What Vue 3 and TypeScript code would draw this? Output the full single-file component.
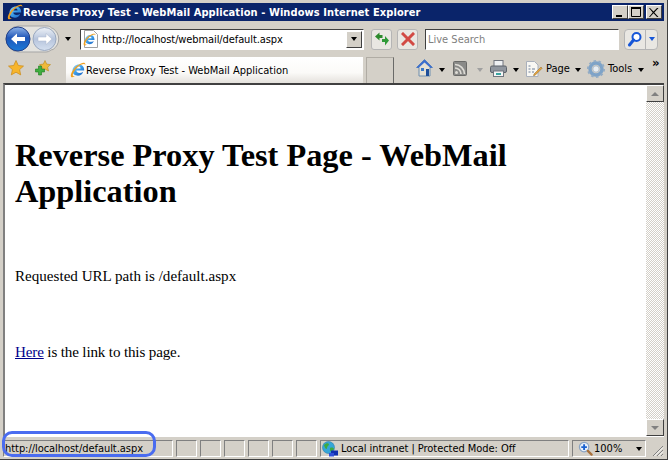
<template>
  <div class="window">
    <svg width="0" height="0" class="defs">
      <defs>
        <linearGradient id="ieBlue" x1="0" y1="0" x2="1" y2="1">
          <stop offset="0" stop-color="#9adcf8" />
          <stop offset="0.5" stop-color="#3a9be8" />
          <stop offset="1" stop-color="#1a5fc0" />
        </linearGradient>
        <linearGradient id="orb" x1="0" y1="0" x2="0" y2="1">
          <stop offset="0" stop-color="#8fb4ea" />
          <stop offset="0.45" stop-color="#1f56b8" />
          <stop offset="1" stop-color="#1a7ad8" />
        </linearGradient>
        <linearGradient id="orbOff" x1="0" y1="0" x2="0" y2="1">
          <stop offset="0" stop-color="#eef2f8" />
          <stop offset="0.5" stop-color="#b6c4dc" />
          <stop offset="1" stop-color="#d5e0f0" />
        </linearGradient>
        <symbol id="ie" viewBox="0 0 16 16">
          <path d="M2.500 9C2.500 5 5.500 2.500 9 2.500c3.400 0 5.200 2.500 5.200 6H6.300c0 2.600 4 3.200 6.900 1.200-.8 2.700-2.900 4-5.200 4-3 0-5.500-1.900-5.500-4.700zM6.400 6.500h4.200C10.500 5.200 9.600 4.600 8.600 4.600c-1 0-1.900.7-2.200 1.900z" fill="url(#ieBlue)" fill-rule="evenodd" />
          <path d="M1.200 15C-.8 12.200 5 3.800 11 1.400c2.600-1 4.600-.6 4.400 1.300-.4-1-2.400-1-4.400 0C7 4.600 2.600 10.600 2.800 13.400c0 .6.800 1 2 .6-1.200 1.200-2.800 1.700-3.600 1z" fill="#f0a020" />
        </symbol>
      </defs>
    </svg>

    <header class="titlebar">
      <svg class="title-icon" width="16" height="16"><use href="#ie" /></svg>
      <span class="title-text">Reverse Proxy Test - WebMail Application - Windows Internet Explorer</span>
      <div class="caption-btns">
        <button class="cap"><svg width="10" height="10"><rect x="1" y="8" width="6" height="2" fill="#000" /></svg></button>
        <button class="cap"><svg width="11" height="10"><path d="M.5 1.500h9v8h-9z" fill="none" stroke="#000" /><rect x="0" y="0" width="10" height="2" fill="#000" /></svg></button>
        <button class="cap close"><svg width="10" height="9"><path d="M1 0l3.500 3.500L8 0h1.500L5.300 4.500l4.200 4.500H8L4.500 5.300 1 9h-1l3.700-4.500L0 0z" fill="#000" /></svg></button>
      </div>
    </header>

    <nav class="navbar">
      <div class="backfwd">
        <svg width="56" height="28" viewBox="0 0 56 28">
          <path d="M14 1h28c4 0 4 2.500 6 2.500a12.500 12.500 0 0 1 0 21c-3 0-3 2.500-7 2.500H14a13 13 0 0 1 0-26z" fill="#e4e3df" stroke="#a5a5a5" />
          <circle cx="13" cy="14" r="12" fill="url(#orb)" stroke="#22408a" />
          <path d="M6 14l6-5.500v3.500h8v4h-8v3.500z" fill="#fff" />
          <circle cx="39.500" cy="14" r="11.500" fill="url(#orbOff)" stroke="#9aa8bf" />
          <path d="M47 14l-6-5.500v3.500h-8v4h8v3.500z" fill="#fff" stroke="#a8b5cc" stroke-width=".5" />
        </svg>
        <span class="caret dark drop-nav"></span>
      </div>

      <div class="address">
        <svg class="page-icon" width="16" height="18" viewBox="0 0 16 18">
          <path d="M1.500 .5h9l4 4v13h-13z" fill="#fff" stroke="#a0a0a0" />
          <use href="#ie" x="0" y="3" width="13" height="13" />
        </svg>
        <span class="address-text">http://localhost/webmail/default.aspx</span>
        <button class="combo"><span class="caret dark"></span></button>
      </div>

      <button class="tool-btn refresh">
        <svg width="16" height="16" viewBox="0 0 16 16">
          <path d="M1 5.500L5.500 1.500v2.500h3v3h-3v2.500z" fill="#2c8a2c" />
          <path d="M15 9.500L11 5v3H8v3h3v3.500z" fill="#2f9a38" />
        </svg>
      </button>
      <button class="tool-btn stop">
        <svg width="14" height="14" viewBox="0 0 14 14">
          <path d="M2 2l10 10M12 2L2 12" stroke="#d24a44" stroke-width="3" stroke-linecap="square" />
        </svg>
      </button>

      <div class="search"><span>Live Search</span></div>
      <div class="search-btn">
        <span class="search-go">
          <svg width="16" height="16" viewBox="0 0 16 16">
            <circle cx="9.500" cy="6" r="4" fill="#fff" stroke="#1656d8" stroke-width="2" />
            <path d="M6.500 9L2.500 14" stroke="#1656d8" stroke-width="3" stroke-linecap="round" />
          </svg>
        </span>
        <span class="search-drop"><span class="caret blue"></span></span>
      </div>
    </nav>

    <div class="favbar">
      <svg class="fav-star" width="16" height="16" viewBox="0 0 16 16">
        <path d="M8 .5l2.300 5 5.200.6-3.900 3.500 1.100 5.300L8 12.200l-4.700 2.700 1.100-5.300L.5 6.100l5.200-.6z" fill="#f7b52c" stroke="#c98a18" stroke-width=".7" />
      </svg>
      <svg class="fav-add" width="16" height="16" viewBox="0 0 16 16">
        <path d="M10 .5l1.700 3.600 3.800.5-2.800 2.600.8 3.800-3.500-2-3.500 2 .8-3.800L4.500 4.600l3.800-.5z" fill="#f0b93a" stroke="#b88a20" stroke-width=".6" />
        <path d="M3.500 6h3v3h3v3h-3v3h-3v-3h-3V9h3z" fill="#3fae3f" stroke="#1d7a1d" stroke-width=".6" />
      </svg>

      <div class="tab">
        <svg width="16" height="16"><use href="#ie" /></svg>
        <span>Reverse Proxy Test - WebMail Application</span>
      </div>
      <div class="tab-new"></div>

      <div class="commands">
        <svg class="cmd-home" width="17" height="18" viewBox="0 0 17 18">
          <path d="M8.500 .5L.5 8.500h2.500V17h11V8.500h2.500z" fill="#e6e1d4" stroke="#6f8fb0" />
          <path d="M8.500 .5L.5 8.500l2 .5 6-5.500 6 5.500 2-.5z" fill="#3c6fcf" />
          <rect x="5" y="9" width="3" height="3" fill="#3a78c8" />
          <rect x="10" y="10" width="3" height="7" fill="#1f4f9a" />
        </svg>
        <span class="caret dark c1"></span>
        <svg class="cmd-feed" width="14" height="15" viewBox="0 0 14 15">
          <rect x=".5" y=".5" width="13" height="14" rx="1" fill="#8a8a88" stroke="#6a6a68" />
          <circle cx="3.500" cy="11.500" r="1.500" fill="#dedcd6" />
          <path d="M2 7a6 6 0 0 1 6 6M2 3.500A9.500 9.500 0 0 1 11.500 13" fill="none" stroke="#dedcd6" stroke-width="1.700" />
        </svg>
        <span class="caret grey c2"></span>
        <svg class="cmd-print" width="17" height="17" viewBox="0 0 17 17">
          <rect x="4" y=".5" width="9" height="6" fill="#eef0f3" stroke="#70757e" />
          <rect x=".5" y="6" width="16" height="6.500" rx="1.500" fill="#8f959e" stroke="#5c626b" />
          <rect x="3.500" y="11" width="10" height="5.500" fill="#f4f5f6" stroke="#70757e" />
          <rect x="6" y="13" width="5" height="2" fill="#3aa4a0" />
        </svg>
        <span class="caret dark c3"></span>
        <svg class="cmd-page" width="18" height="18" viewBox="0 0 18 18">
          <path d="M1.500 1.500h8l3.500 3.500v11.500h-11.500z" fill="#f8f7f3" stroke="#a9b0bc" />
          <path d="M3.500 6h2M3.500 9h2M3.500 12h2M7 9h3M7 12h2" stroke="#6d7f99" />
          <path d="M9 14l7-7 1.200 1.200-7 7-1.700.5z" fill="#e8a33a" stroke="#8a6a30" stroke-width=".5" />
        </svg>
        <span class="cmd-label page-label">Page</span>
        <span class="caret dark c4"></span>
        <svg class="cmd-gear" width="18" height="18" viewBox="0 0 18 18">
          <circle cx="9" cy="9" r="6" fill="none" stroke="#7ea3c8" stroke-width="3.400" />
          <circle cx="9" cy="9" r="8" fill="none" stroke="#92abc4" stroke-width="2" stroke-dasharray="2.500 2.500" />
          <circle cx="9" cy="9" r="3.200" fill="#e8edf2" stroke="#8aa0b6" stroke-width=".6" />
        </svg>
        <span class="cmd-label tools-label">Tools</span>
        <span class="caret dark c5"></span>
        <span class="chevrons">»</span>
      </div>
    </div>

    <div class="viewport">
      <main class="page">
        <h1>Reverse Proxy Test Page - WebMail Application</h1>
        <p class="path-line">Requested URL path is /default.aspx</p>
        <p class="link-line"><a href="#">Here</a> is the link to this page.</p>
      </main>
      <aside class="scrollbar">
        <div class="arrow"><span class="tri up"></span></div>
        <div class="track"></div>
        <div class="arrow"><span class="tri down"></span></div>
      </aside>
    </div>

    <footer class="statusbar">
      <div class="cell url">http://localhost/default.aspx</div>
      <div v-for="n in 6" :key="n" class="cell blank"></div>
      <div class="cell zone">
        <svg width="16" height="16" viewBox="0 0 16 16">
          <circle cx="6.500" cy="6.500" r="6" fill="#35a6d8" stroke="#2a7fae" stroke-width=".6" />
          <path d="M2 4c2-2 4-2 5-1 0 2-2 2-2 4s-2 1-3-3zM8 7c2-1 4 0 4 1-1 2-3 3-4 2z" fill="#3faa3f" />
          <rect x="9" y="9.500" width="7" height="5" fill="#1030b0" />
          <rect x="7" y="12" width="5" height="3.500" fill="#3050d8" />
        </svg>
        <span>Local intranet | Protected Mode: Off</span>
      </div>
      <div class="cell zoom">
        <svg class="zoom-icon" width="15" height="15" viewBox="0 0 16 16">
          <circle cx="6.500" cy="6.500" r="5" fill="#e8f0fa" stroke="#8aa4c4" stroke-width="1.300" />
          <path d="M6.500 3.500v6M3.500 6.500h6" stroke="#1a62d0" stroke-width="2" />
          <path d="M10.500 10.500l4 4" stroke="#a8703a" stroke-width="2.400" stroke-linecap="round" />
        </svg>
        <span>100%</span>
        <span class="caret dark zoom-caret"></span>
      </div>
      <svg class="grip" width="12" height="12" viewBox="0 0 12 12">
        <path d="M11 1L1 11M11 5l-6 6M11 9l-2 2" stroke="#808080" />
        <path d="M11 2.500L2.500 11M11 6.500L6.500 11M11 10.500l-.5.500" stroke="#fff" />
      </svg>
    </footer>

    <div class="status-highlight"></div>
  </div>
</template>

<script setup lang="ts">
</script>

<style>
html,
body {
  margin: 0;
  overflow: hidden;
}
</style>

<style scoped>
.window {
  position: relative;
  width: 668px;
  height: 460px;
  box-sizing: border-box;
  padding: 3px 3px 2px;
  background: #d4d0c8;
  border-bottom: 1px solid #404040;
  border-right: 1px solid #404040;
  display: flex;
  flex-direction: column;
  font-family: "DejaVu Sans Condensed", "DejaVu Sans", sans-serif;
  font-stretch: condensed;
  color: #000;
  overflow: hidden;
}

.defs {
  position: absolute;
}

button {
  padding: 0;
  margin: 0;
  font: inherit;
}

.titlebar {
  height: 18px;
  flex: none;
  background: #0a246a;
  display: flex;
  align-items: center;
  padding: 0 2px 0 4px;
}

.title-icon {
  flex: none;
}

.title-text {
  color: #fff;
  font-weight: 700;
  font-size: 11px;
  letter-spacing: 0.08px;
  white-space: nowrap;
}

.caption-btns {
  margin-left: auto;
  display: flex;
}

.cap {
  width: 16px;
  height: 14px;
  background: #d4d0c8;
  border: 1px solid;
  border-color: #fff #404040 #404040 #fff;
  display: flex;
  align-items: center;
  justify-content: center;
}

.cap.close {
  margin-left: 2px;
}

.navbar {
  height: 36px;
  flex: none;
  display: flex;
  align-items: center;
}

.backfwd {
  display: flex;
  align-items: center;
  flex: none;
  width: 77px;
  padding-left: 2px;
  box-sizing: border-box;
}

.drop-nav {
  margin-left: 4px;
}

.address {
  width: 284px;
  height: 21px;
  box-sizing: border-box;
  background: #fff;
  border: 1px solid;
  border-color: #404040 #fff #fff #404040;
  display: flex;
  align-items: center;
  flex: none;
  padding-left: 2px;
}

.page-icon {
  flex: none;
}

.address-text {
  font-size: 11px;
  margin-left: 3px;
  letter-spacing: -0.1px;
  white-space: nowrap;
}

.combo {
  margin-left: auto;
  width: 16px;
  height: 17px;
  margin-right: 1px;
  background: #d4d0c8;
  border: 1px solid;
  border-color: #fff #404040 #404040 #fff;
  display: flex;
  align-items: center;
  justify-content: center;
}

.tool-btn {
  width: 21px;
  height: 21px;
  box-sizing: border-box;
  background: #e9e7e2;
  border: 1px solid #b5b5b5;
  border-radius: 3px;
  display: flex;
  align-items: center;
  justify-content: center;
  flex: none;
}

.refresh {
  margin-left: 7px;
}

.stop {
  margin-left: 5px;
}

.search {
  width: 194px;
  height: 21px;
  margin-left: 7px;
  box-sizing: border-box;
  flex: none;
  background: #fff;
  border: 1px solid;
  border-color: #404040 #fff #fff #404040;
  display: flex;
  align-items: center;
  padding-left: 2px;
  font-size: 11px;
  color: #808080;
}

.search-btn {
  margin-left: 5px;
  width: 34px;
  height: 21px;
  box-sizing: border-box;
  flex: none;
  display: flex;
  background: #e9e7e2;
  border: 1px solid #b5b5b5;
  border-radius: 4px;
}

.search-go {
  width: 20px;
  display: flex;
  align-items: center;
  justify-content: center;
  border-right: 1px solid #b5b5b5;
}

.search-drop {
  flex: 1;
  display: flex;
  align-items: center;
  justify-content: center;
}

.caret {
  display: inline-block;
  width: 0;
  height: 0;
  border-left: 3.500px solid transparent;
  border-right: 3.500px solid transparent;
  border-top: 4px solid #000;
  flex: none;
}

.caret.blue {
  border-top-color: #1656d8;
}

.caret.grey {
  border-top-color: #a0a0a0;
}

.favbar {
  height: 26px;
  flex: none;
  display: flex;
  align-items: flex-start;
  position: relative;
}

.fav-star {
  margin: 3px 0 0 5px;
  flex: none;
}

.fav-add {
  margin: 3px 0 0 11px;
  flex: none;
}

.tab {
  margin-left: 15px;
  width: 297px;
  height: 26px;
  box-sizing: border-box;
  flex: none;
  background: linear-gradient(to bottom, #ffffff 0%, #fbfaf8 60%, #e4e1dc 100%);
  display: flex;
  align-items: center;
  padding-left: 4px;
  font-size: 11px;
  white-space: nowrap;
}

.tab-new {
  width: 28px;
  height: 26px;
  margin-left: 3px;
  flex: none;
  box-sizing: border-box;
  border: 1px solid #b0aca4;
  border-bottom: none;
  border-right: 1px solid #6a6a68;
}

.commands {
  flex: 1;
  height: 26px;
  position: relative;
}

/* toolbar items sit on a fixed strip, same spacing as the reference */
.commands > * {
  position: absolute;
}

.cmd-home { left: 22px; top: 2px; }
.c1 { left: 45px; top: 11px; }
.cmd-feed { left: 59px; top: 4px; }
.c2 { left: 83px; top: 11px; }
.cmd-print { left: 96px; top: 3px; }
.c3 { left: 119px; top: 11px; }
.cmd-page { left: 131px; top: 3px; }
.page-label { left: 152px; top: 5px; }
.c4 { left: 181px; top: 11px; }
.cmd-gear { left: 193px; top: 3px; }
.tools-label { left: 214px; top: 5px; }
.c5 { left: 244px; top: 11px; }
.chevrons { left: 258px; top: -2px; font-size: 13px; font-weight: 700; }

.cmd-label {
  font-size: 11px;
  white-space: nowrap;
}

.viewport {
  flex: 1;
  min-height: 0;
  display: flex;
  border-top: 2px solid #404040;
  border-left: 2px solid #808080;
  border-bottom: 1px solid #fff;
  background: #fff;
}

.page {
  flex: 1;
  min-width: 0;
  background: #fff;
  font-family: "Liberation Serif", serif;
  font-size: 15.1px;
  padding: 0 10px;
  overflow: hidden;
}

h1 {
  margin: 52px 0 0;
  font-size: 32.35px;
  line-height: 36px;
  font-weight: 700;
}

.path-line {
  margin: 58px 0 0;
  line-height: 18px;
}

.link-line {
  margin: 58px 0 0;
  line-height: 18px;
  letter-spacing: -0.15px;
}

a {
  color: #00008b;
  text-decoration: underline;
}

.scrollbar {
  width: 18px;
  flex: none;
  display: flex;
  flex-direction: column;
}

.arrow {
  height: 17px;
  box-sizing: border-box;
  flex: none;
  background: #d4d0c8;
  border: 1px solid;
  border-color: #fff #404040 #404040 #fff;
  display: flex;
  align-items: center;
  justify-content: center;
}

.tri {
  width: 0;
  height: 0;
  border-left: 4px solid transparent;
  border-right: 4px solid transparent;
}

.tri.up {
  border-bottom: 4px solid #808080;
}

.tri.down {
  border-top: 4px solid #808080;
}

.track {
  flex: 1;
  background-color: #fff;
  background-image: conic-gradient(#d4d0c8 25%, #fff 0 50%, #d4d0c8 0 75%, #fff 0);
  background-size: 2px 2px;
}

.statusbar {
  height: 20px;
  flex: none;
  display: flex;
  align-items: flex-end;
  gap: 3px;
  font-size: 11px;
  position: relative;
  box-sizing: border-box;
}

.cell {
  height: 17px;
  box-sizing: border-box;
  border-top: 1px solid #808080;
  border-left: 1px solid #808080;
  border-bottom: 1px solid #fff;
  border-right: 1px solid #fff;
  flex: none;
  display: flex;
  align-items: center;
  white-space: nowrap;
}

.cell.url {
  width: 170px;
  padding-left: 1px;
  letter-spacing: -0.05px;
}

.cell.blank {
  width: 21px;
}

.cell.zone {
  width: 249px;
  padding-left: 1px;
  gap: 3px;
  letter-spacing: -0.05px;
}

.cell.zoom {
  width: 74px;
  padding-left: 5px;
  gap: 1px;
}

.zoom-icon {
  flex: none;
}

.zoom-caret {
  margin-left: 13px;
}

.grip {
  position: absolute;
  right: 0;
  bottom: 0;
}

.status-highlight {
  position: absolute;
  left: 2px;
  top: 431px;
  width: 154px;
  height: 26px;
  box-sizing: border-box;
  border: 3px solid #4a6cf0;
  border-radius: 10px;
  pointer-events: none;
}
</style>
